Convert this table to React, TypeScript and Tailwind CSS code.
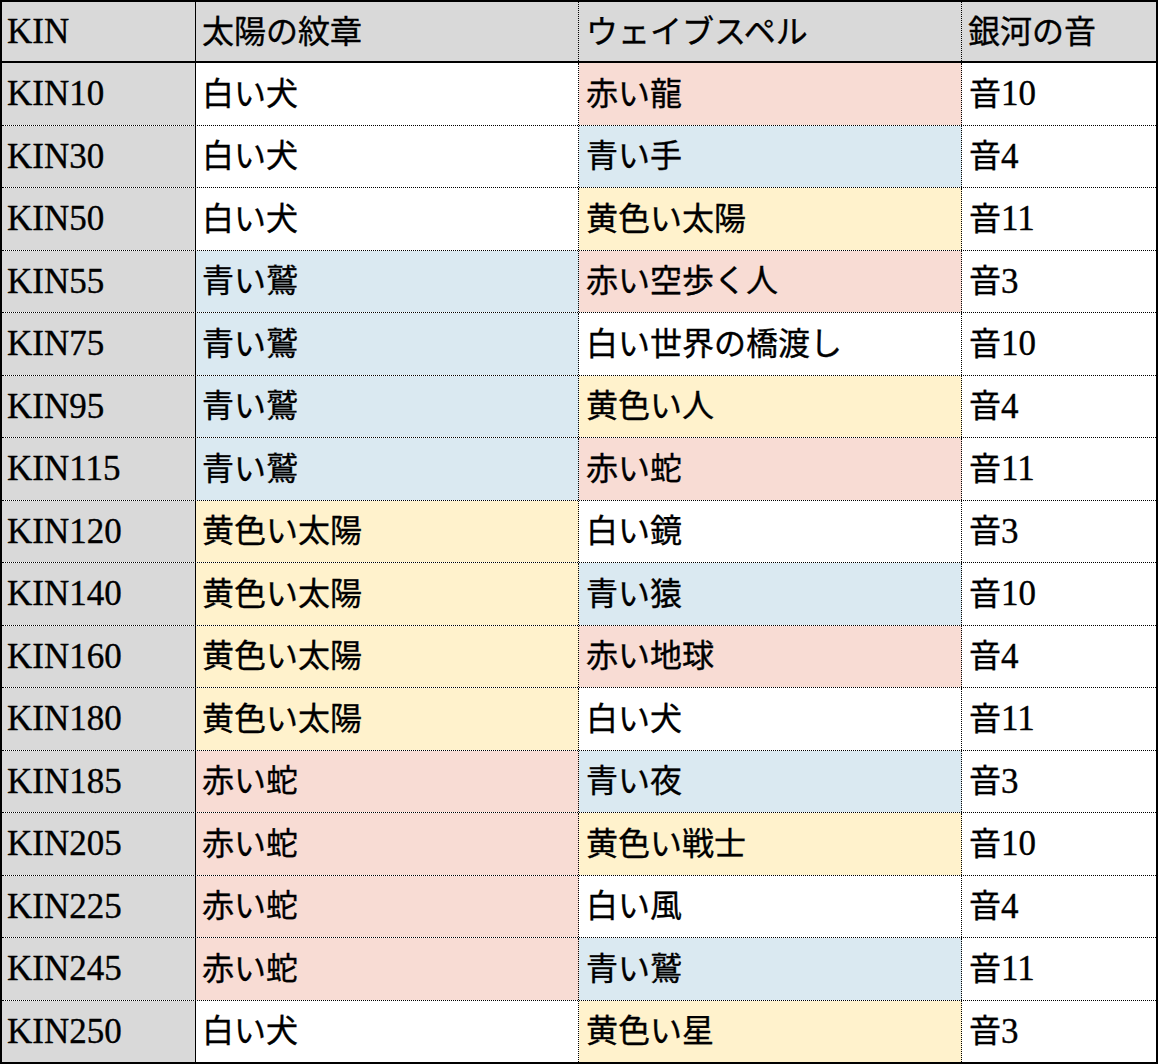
import React from "react";

type C = "w" | "b" | "p" | "y";
const rows: [string, string, C, string, C, string][] = [
  ["KIN10", "白い犬", "w", "赤い龍", "p", "音10"],
  ["KIN30", "白い犬", "w", "青い手", "b", "音4"],
  ["KIN50", "白い犬", "w", "黄色い太陽", "y", "音11"],
  ["KIN55", "青い鷲", "b", "赤い空歩く人", "p", "音3"],
  ["KIN75", "青い鷲", "b", "白い世界の橋渡し", "w", "音10"],
  ["KIN95", "青い鷲", "b", "黄色い人", "y", "音4"],
  ["KIN115", "青い鷲", "b", "赤い蛇", "p", "音11"],
  ["KIN120", "黄色い太陽", "y", "白い鏡", "w", "音3"],
  ["KIN140", "黄色い太陽", "y", "青い猿", "b", "音10"],
  ["KIN160", "黄色い太陽", "y", "赤い地球", "p", "音4"],
  ["KIN180", "黄色い太陽", "y", "白い犬", "w", "音11"],
  ["KIN185", "赤い蛇", "p", "青い夜", "b", "音3"],
  ["KIN205", "赤い蛇", "p", "黄色い戦士", "y", "音10"],
  ["KIN225", "赤い蛇", "p", "白い風", "w", "音4"],
  ["KIN245", "赤い蛇", "p", "青い鷲", "b", "音11"],
  ["KIN250", "白い犬", "w", "黄色い星", "y", "音3"],
];

const bg: Record<C, string> = {
  w: "bg-white",
  b: "bg-[#dae9f1]",
  p: "bg-[#f8dcd4]",
  y: "bg-[#fff2cc]",
};

export default function App() {
  return (
    <div
      className="w-[1158px] h-[1064px] border-2 border-black flex flex-col text-[35px] text-black leading-none [-webkit-text-stroke:0.35px_black]"
      style={{ fontFamily: '"Liberation Serif", "Noto Sans CJK JP", serif' }}
    >
      <div className="h-[61px] flex border-b-2 border-black bg-[#d9d9d9]">
        <div className="w-[194px] border-r border-black flex items-center pl-[5px]">KIN</div>
        <div className="w-[383px] border-r border-dotted border-black flex items-center pl-[6px] text-[32px]">太陽の紋章</div>
        <div className="w-[383px] border-r border-dotted border-black flex items-center pl-[7px] text-[32px]">ウェイブスペル</div>
        <div className="w-[194px] flex items-center pl-[6px] text-[32px]">銀河の音</div>
      </div>
      {rows.map((r, i) => (
        <div
          key={i}
          className={
            "flex-1 flex " + (i < rows.length - 1 ? "border-b border-dotted border-black" : "")
          }
        >
          <div className="w-[194px] border-r border-black bg-[#d9d9d9] flex items-center pl-[5px]">{r[0]}</div>
          <div className={"w-[383px] border-r border-dotted border-black flex items-center pl-[6px] text-[32px] " + bg[r[2]]}>
            {r[1]}
          </div>
          <div className={"w-[383px] border-r border-dotted border-black flex items-center pl-[7px] text-[32px] " + bg[r[4]]}>
            {r[3]}
          </div>
          <div className="w-[194px] bg-white flex items-center pl-[7px] text-[32px]">
            <span>音</span>
            <span className="text-[35px]">{r[5].slice(1)}</span>
          </div>
        </div>
      ))}
    </div>
  );
}
